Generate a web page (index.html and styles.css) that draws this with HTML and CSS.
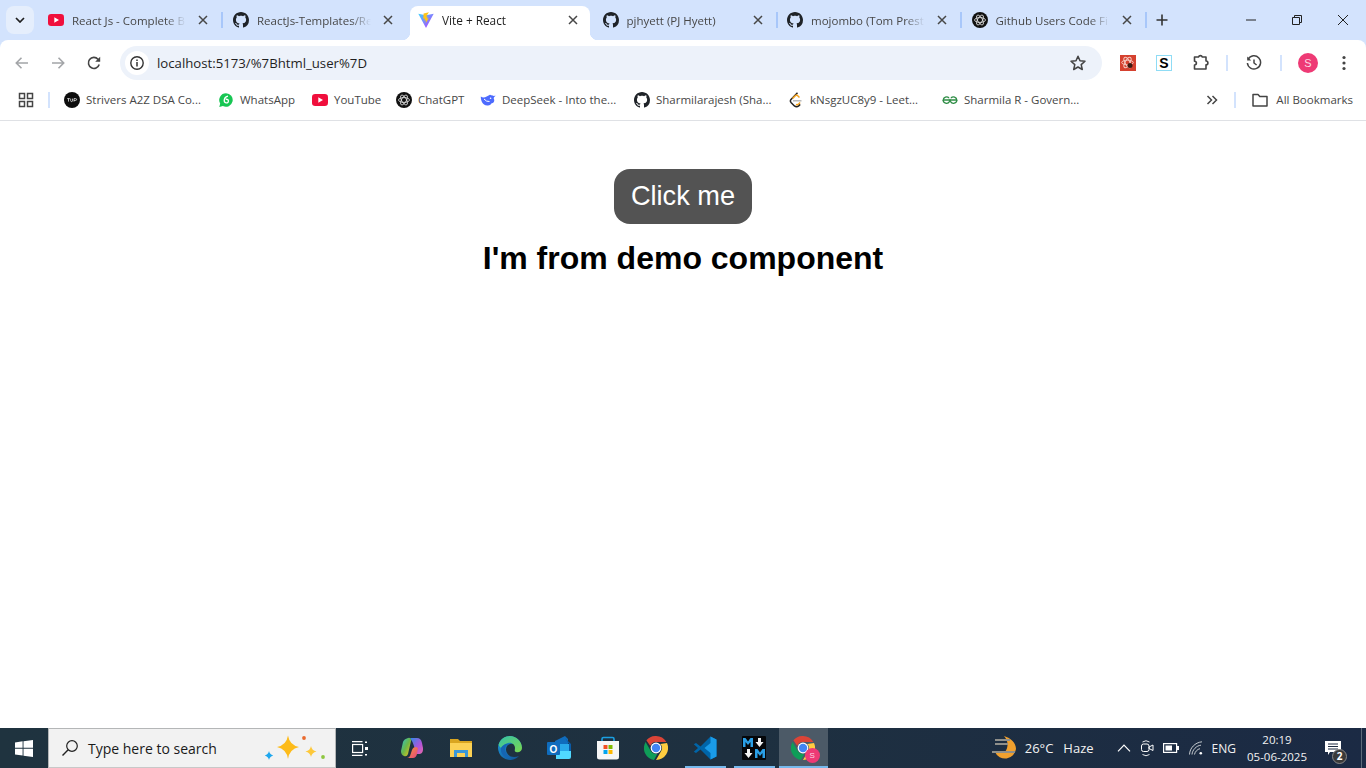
FILE: index.html
```html
<!DOCTYPE html>
<html lang="en">
<head>
<meta charset="utf-8">
<title>Vite + React</title>
<link rel="stylesheet" href="styles.css">
</head>
<body>
<svg class="defs" aria-hidden="true">
  <defs>
    <symbol id="gh" viewBox="0 0 16 16"><path fill="#1f2328" d="M8 0C3.58 0 0 3.58 0 8c0 3.54 2.29 6.53 5.47 7.59.4.07.55-.17.55-.38 0-.19-.01-.82-.01-1.49-2.01.37-2.53-.49-2.69-.94-.09-.23-.48-.94-.82-1.13-.28-.15-.68-.52-.01-.53.63-.01 1.08.58 1.23.82.72 1.21 1.87.87 2.33.66.07-.52.28-.87.51-1.07-1.78-.2-3.64-.89-3.64-3.95 0-.87.31-1.59.82-2.15-.08-.2-.36-1.02.08-2.12 0 0 .67-.21 2.2.82.64-.18 1.32-.27 2-.27s1.36.09 2 .27c1.53-1.04 2.2-.82 2.2-.82.44 1.1.16 1.92.08 2.12.51.56.82 1.27.82 2.15 0 3.07-1.87 3.75-3.65 3.95.29.25.54.73.54 1.48 0 1.07-.01 1.93-.01 2.2 0 .21.15.46.55.38A8.013 8.013 0 0016 8c0-4.42-3.58-8-8-8z"/></symbol>
    <symbol id="yt" viewBox="0 0 16 16"><rect x="0" y="2" width="16" height="12" rx="3.2" fill="#f00f3c"/><path d="M6.3 5.2v5.6L11 8z" fill="#fff"/></symbol>
    <symbol id="gpt" viewBox="0 0 16 16"><circle cx="8" cy="8" r="8" fill="#111"/><g fill="none" stroke="#e8e8e8" stroke-width=".8"><ellipse cx="8" cy="8" rx="5.5" ry="2.4"/><ellipse cx="8" cy="8" rx="5.5" ry="2.4" transform="rotate(60 8 8)"/><ellipse cx="8" cy="8" rx="5.5" ry="2.4" transform="rotate(120 8 8)"/></g></symbol>
    <symbol id="x" viewBox="0 0 10 10"><path d="M1 1l8 8M9 1L1 9" stroke="#474747" stroke-width="1.5" fill="none"/></symbol>
    <symbol id="chrome" viewBox="0 0 24 24"><path fill="#db4437" d="M12 0a12 12 0 0 1 10.4 6H12a6 6 0 0 0-5.7 4.1L2.4 4.3A12 12 0 0 1 12 0z"/><path fill="#0f9d58" d="M1.6 6 6.8 15a6 6 0 0 0 6.6 2.8L10 24A12 12 0 0 1 1.6 6z"/><path fill="#ffcd40" d="M23 7a12 12 0 0 1-11 17l5.2-9A6 6 0 0 0 16.4 8z"/><circle cx="12" cy="12" r="5.4" fill="#fff"/><circle cx="12" cy="12" r="4.2" fill="#4285f4"/></symbol>
  </defs>
</svg>

<header class="tabstrip">
  <button class="tabsearch"><svg width="10" height="6" viewBox="0 0 10 6"><path d="M1 1l4 4 4-4" fill="none" stroke="#1f1f1f" stroke-width="1.7"/></svg></button>
  <div class="tab lead sep">
    <svg class="fav" viewBox="0 0 16 16"><use href="#yt"/></svg><span class="title">React Js - Complete B</span>
    <svg class="close" viewBox="0 0 10 10"><use href="#x"/></svg>
  </div>
  <div class="tab lead">
    <svg class="fav" viewBox="0 0 16 16"><use href="#gh"/></svg><span class="title">ReactJs-Templates/Re</span>
    <svg class="close" viewBox="0 0 10 10"><use href="#x"/></svg>
  </div>
  <div class="tab active">
    <svg class="fav" viewBox="0 0 16 16"><defs><linearGradient id="vg" x1="0" y1="0" x2="1" y2="1"><stop offset="0" stop-color="#41d1ff"/><stop offset="1" stop-color="#bd34fe"/></linearGradient></defs><path fill="url(#vg)" d="M.3 1.800 8 16 15.700 1.800 8 3.200z"/><path fill="#ffc517" d="M10.900.3 5.600 1.400l-.3 5.400 1.600-.4-.4 2.300 1.600-.4-.5 3 3.200-5.100-1.800.4.6-2.200-1.600.3z"/></svg><span class="title">Vite + React</span>
    <svg class="close" viewBox="0 0 10 10"><use href="#x"/></svg>
  </div>
  <div class="tab sep">
    <svg class="fav" viewBox="0 0 16 16"><use href="#gh"/></svg><span class="title">pjhyett (PJ Hyett)</span>
    <svg class="close" viewBox="0 0 10 10"><use href="#x"/></svg>
  </div>
  <div class="tab sep">
    <svg class="fav" viewBox="0 0 16 16"><use href="#gh"/></svg><span class="title">mojombo (Tom Prest</span>
    <svg class="close" viewBox="0 0 10 10"><use href="#x"/></svg>
  </div>
  <div class="tab sep">
    <svg class="fav" viewBox="0 0 16 16"><use href="#gpt"/></svg><span class="title">Github Users Code Fi</span>
    <svg class="close" viewBox="0 0 10 10"><use href="#x"/></svg>
  </div>
  <button class="newtab"><svg width="12" height="12" viewBox="0 0 12 12"><path d="M6 .5v11M.5 6h11" stroke="#333" stroke-width="1.6"/></svg></button>
  <div class="winctrls">
    <button class="winbtn"><svg width="12" height="12" viewBox="0 0 12 12"><path d="M1 6h10" stroke="#222" stroke-width="1"/></svg></button>
    <button class="winbtn"><svg width="12" height="12" viewBox="0 0 12 12"><path d="M3.500 3V1.500h7v7H9M1.500 3.500h7v7h-7z" fill="none" stroke="#222" stroke-width="1"/></svg></button>
    <button class="winbtn"><svg width="12" height="12" viewBox="0 0 12 12"><path d="M1 1l10 10M11 1 1 11" stroke="#222" stroke-width="1"/></svg></button>
  </div>
</header>

<nav class="toolbar">
  <button class="nav"><svg width="16" height="16" viewBox="0 0 16 16"><path d="M14 8H2.500M7.500 2.800 2.300 8l5.200 5.200" fill="none" stroke="#a3a5a8" stroke-width="1.6"/></svg></button>
  <button class="nav"><svg width="16" height="16" viewBox="0 0 16 16"><path d="M2 8h11.500M8.500 2.800 13.700 8l-5.200 5.200" fill="none" stroke="#a3a5a8" stroke-width="1.6"/></svg></button>
  <button class="nav"><svg width="16" height="16" viewBox="0 0 16 16"><path d="M13.200 9.500A5.500 5.500 0 1 1 12 4.200L13.600 6" fill="none" stroke="#444" stroke-width="1.6"/><path d="M14.200 1.800v5h-5z" fill="#444"/></svg></button>
  <div class="omnibox">
    <span class="siteinfo"><svg width="16" height="16" viewBox="0 0 16 16"><circle cx="8" cy="8" r="6.200" fill="none" stroke="#333" stroke-width="1.4"/><path d="M8 7v4.400M8 4.400v1.500" stroke="#333" stroke-width="1.5"/></svg></span>
    <span class="url">localhost:5173/%7Bhtml_user%7D</span>
    <svg class="star" width="18" height="18" viewBox="0 0 18 18"><path d="m9 2.200 2 4.600 5 .5-3.800 3.300 1.100 4.900L9 13l-4.300 2.500 1.100-4.900L2 7.300l5-.5z" fill="none" stroke="#444" stroke-width="1.5" stroke-linejoin="round"/></svg>
  </div>
  <div class="actions">
    <svg class="ext-red" width="16" height="16" viewBox="0 0 16 16"><rect width="16" height="16" fill="#d5412f"/><g fill="none" stroke="#f6c9c0" stroke-width="1"><ellipse cx="7.500" cy="7.500" rx="5.800" ry="2.300"/><ellipse cx="7.500" cy="7.500" rx="5.800" ry="2.300" transform="rotate(60 7.500 7.500)"/><ellipse cx="7.500" cy="7.500" rx="5.800" ry="2.300" transform="rotate(120 7.500 7.500)"/></g><circle cx="10" cy="10.500" r="2.500" fill="#3d1a12"/></svg>
    <span class="ext-s">S</span>
    <svg class="puzzle" width="18" height="18" viewBox="0 0 18 18"><path d="M2.500 3H6.500a2 2 0 0 1 3.800 0h3.700v4a1.900 1.900 0 0 1 0 3.800V15H2.500v-4a1.800 1.800 0 0 0 0-3.800z" fill="none" stroke="#444" stroke-width="1.6" stroke-linejoin="round"/></svg>
    <i class="actsep"></i>
    <svg class="history" width="16" height="16" viewBox="0 0 16 16"><path d="M2.200 4.200A6.600 6.600 0 1 1 1.400 8" fill="none" stroke="#444" stroke-width="1.5"/><path d="M1.200 1.600v4h4z" fill="#444"/><path d="M8 4.400V8l2.600 2" fill="none" stroke="#444" stroke-width="1.5"/></svg>
    <i class="actsep"></i>
    <span class="avatar">S</span>
    <svg class="menu" width="4" height="16" viewBox="0 0 4 16"><circle cx="2" cy="2.500" r="1.600" fill="#444"/><circle cx="2" cy="8" r="1.600" fill="#444"/><circle cx="2" cy="13.500" r="1.600" fill="#444"/></svg>
  </div>
</nav>

<div class="bookmarks">
  <svg class="apps" width="16" height="16" viewBox="0 0 16 16"><g fill="none" stroke="#444" stroke-width="1.5"><rect x="1.500" y="1.500" width="5" height="5"/><rect x="9.500" y="1.500" width="5" height="5"/><rect x="1.500" y="9.500" width="5" height="5"/><rect x="9.500" y="9.500" width="5" height="5"/></g></svg>
  <i class="bmsep first"></i>
  <a class="bm long"><svg width="16" height="16" viewBox="0 0 16 16"><circle cx="8" cy="8" r="8" fill="#0d0d0d"/><path d="M3.200 6.600h2.600M4.500 6.600v3M6.700 6.600v2.200q0 .8.9.8t.9-.8V6.600M10 9.600V6.600h1.600q1 0 1 .9t-1 .9H10" fill="none" stroke="#fff" stroke-width=".7"/></svg><span>Strivers A2Z DSA Co...</span></a>
  <a class="bm whatsapp"><svg width="16" height="16" viewBox="0 0 16 16"><path d="M8 1.200a6.800 6.800 0 0 0-5.800 10.300L1.300 15l3.600-.9A6.800 6.800 0 1 0 8 1.200z" fill="#17c653"/><path d="M10 4.200Q7 4.600 6.300 7.600q-.5 2.800 1.800 3.300 2.200.2 2.300-1.900 0-2-2.700-1.700" fill="none" stroke="#fff" stroke-width="1.3"/></svg><span>WhatsApp</span></a>
  <a class="bm short"><svg width="16" height="16" viewBox="0 0 16 16"><use href="#yt"/></svg><span>YouTube</span></a>
  <a class="bm short"><svg width="16" height="16" viewBox="0 0 16 16"><use href="#gpt"/></svg><span>ChatGPT</span></a>
  <a class="bm long"><svg width="16" height="16" viewBox="0 0 16 16"><path d="M15.400 3.400c-.6.3-.8.5-1.300.5-.8 0-.8-.5-1.600-.5-3 0-1.600-.9-3-.4C7 4 4 7 .8 4.400.6 8 2.400 14 8 13.400c2-.2 3-1.200 3.600-2.200 1.400.1 2.600-.9 2.700-3 0-1.400-1-1.500-.4-2.800.4-.7 1.300-1 1.500-2z" fill="#4d6bfe"/><path d="M4 7q2.500 3 5.500 2.500" stroke="#fff" stroke-width="1" fill="none"/><circle cx="10.600" cy="6.200" r=".8" fill="#fff"/></svg><span>DeepSeek - Into the...</span></a>
  <a class="bm long"><svg width="16" height="16" viewBox="0 0 16 16"><use href="#gh"/></svg><span>Sharmilarajesh (Sha...</span></a>
  <a class="bm long"><svg width="16" height="16" viewBox="0 0 16 16"><path d="M9.500.8 3 7.400q-1.200 1.500 0 3l3.400 3.500q2.200 1.800 4.300 0l1.500-1.500" fill="none" stroke="#222" stroke-width="1.500"/><path d="M8 12.500q1.500.5 2.600-.5l1.500-1.500" fill="none" stroke="#f4a21c" stroke-width="1.500"/><path d="M5 8.800h8.500" stroke="#b3b3b3" stroke-width="1.400"/><path d="M4.500 6.500 7.500 3.500q1-.8 2.200.2l1.800 1.800" fill="none" stroke="#f4a21c" stroke-width="1.500"/></svg><span>kNsgzUC8y9 - Leet...</span></a>
  <a class="bm"><svg width="16" height="16" viewBox="0 0 16 16"><g fill="none" stroke="#2f8d46" stroke-width="1.300"><path d="M8 8H1.200a3.300 3.300 0 0 1 5.800-2M8 8h6.800A3.300 3.300 0 0 0 9 6"/><path d="M1.200 8a3.300 3.300 0 0 0 6.200 1.600L8 8l.6 1.600A3.300 3.300 0 0 0 14.800 8"/></g></svg><span>Sharmila R - Govern...</span></a>
  <svg class="more" width="12" height="10" viewBox="0 0 12 10"><path d="M1.500 1l4 4-4 4M6.500 1l4 4-4 4" fill="none" stroke="#444" stroke-width="1.500"/></svg>
  <i class="bmsep"></i>
  <a class="allbm"><svg width="18" height="16" viewBox="0 0 18 16"><path d="M2 2.500h5l1.800 2H16v9.500H2z" fill="none" stroke="#444" stroke-width="1.500" stroke-linejoin="round"/></svg><span>All Bookmarks</span></a>
</div>

<main class="page">
  <button class="cta">Click me</button>
  <h1 class="heading">I'm from demo component</h1>
</main>

<footer class="taskbar">
  <button class="start"><svg width="18" height="17" viewBox="0 0 18 17"><path fill="#fff" d="M0 2.400 7.600 1.300v6.500H0zM8.500 1.200 18 0v7.800H8.500zM0 8.800h7.600v6.800L0 14.500zM8.500 8.800H18V17l-9.500-1.300z"/></svg></button>
  <div class="search">
    <svg width="18" height="18" viewBox="0 0 18 18"><circle cx="11" cy="7" r="5.300" fill="none" stroke="#222" stroke-width="1.200"/><path d="M7.200 10.800 1.500 16.500" stroke="#222" stroke-width="1.400"/></svg>
    <span class="placeholder">Type here to search</span>
    <svg class="sparkle" width="64" height="32" viewBox="0 0 64 32"><path d="M25 3.500q1.500 9.500 11 11.500-9.500 2-11 12-1.500-10-11-12 9.500-2 11-11.500z" fill="#fdbb1a"/><path d="M48 14q.8 4.500 5.500 5.500-4.700 1-5.500 5.500-.8-4.500-5.500-5.500 4.700-1 5.500-5.500z" fill="#fdc83a"/><path d="M6 19q.6 3.400 4.200 4.500-3.600 1-4.200 4.500-.6-3.500-4.200-4.500 3.600-1.100 4.200-4.500z" fill="#1ea7ee"/><circle cx="41" cy="6" r="1.900" fill="#ea6a2e"/><circle cx="60" cy="25" r="1.900" fill="#8dc63f"/></svg>
  </div>
  <button class="tb taskview"><svg width="16" height="15" viewBox="0 0 16 15"><g fill="none" stroke="#fff" stroke-width="1.200"><path d="M0 .6h10.500M0 14.400h10.500"/><rect x=".6" y="3.500" width="10" height="8"/></g><path d="M13 .5h2v1.500h-2zM13 6h3v3h-3zM13 13h2v1.500h-2z" fill="#fff"/></svg></button>
  <button class="tb"><svg width="24" height="24" viewBox="0 0 24 24"><defs><linearGradient id="cp1" x1="0" y1="0" x2="1" y2="1"><stop offset="0" stop-color="#2ec5ce"/><stop offset=".5" stop-color="#6bb748"/><stop offset="1" stop-color="#f5c518"/></linearGradient><linearGradient id="cp2" x1="0" y1="0" x2="1" y2="1"><stop offset="0" stop-color="#2c8be8"/><stop offset=".6" stop-color="#b254d9"/><stop offset="1" stop-color="#e86aa8"/></linearGradient><linearGradient id="cp3" x1="0" y1="0" x2="1" y2="1"><stop offset="0" stop-color="#f59a36"/><stop offset="1" stop-color="#e6447e"/></linearGradient></defs><path fill="url(#cp2)" d="M10 2h7q4 0 5 5l1 5q.5 5-3 6h-4l-2-8q-1-4-4-8z"/><path fill="url(#cp1)" d="M8 2q3-1 3 3L8 18q-1 3-4 2-3-1-3-5l2-9q1-3 5-4z"/><path fill="url(#cp3)" d="M7 22h6q3 0 4-4l1-6-2-1q-3 0-4 3l-2 6q-1 2-3 2z"/></svg></button>
  <button class="tb"><svg width="22" height="20" viewBox="0 0 22 20"><path fill="#d9a520" d="M0 1h8l2 2h12v15H0z"/><path fill="#fbd155" d="M0 5h22v14H0z"/><path fill="#3a98d8" d="M4 12h14v7h-3v-4H7v4H4z"/></svg></button>
  <button class="tb"><svg width="24" height="24" viewBox="0 0 24 24"><defs><linearGradient id="ed1" x1="0" y1="0" x2="1" y2="1"><stop offset="0" stop-color="#34c1a8"/><stop offset="1" stop-color="#7bd84f"/></linearGradient><linearGradient id="ed2" x1="0" y1="0" x2="1" y2="1"><stop offset="0" stop-color="#1b9de2"/><stop offset="1" stop-color="#114a8b"/></linearGradient></defs><path fill="url(#ed2)" d="M12 0a12 12 0 1 0 9 20c-5 2-10 1-12-3-2-3-1-8 3-9 3-1 7 1 7 4h5C24 5 18 0 12 0z"/><path fill="url(#ed1)" d="M.5 9C2 3 7 0 12 0c6 0 12 5 12 12 0 3-3 5-6 4-2-1-1-2-1-4 0-3-3-6-7-5C6 8 4 10 3 12 2 11 1 10 .5 9z"/><path fill="#1565b3" d="M3 12c2-3 5-5 8-4-4 1-5 6-3 9 1 2 3 4 6 5C8 23 2 19 3 12z"/></svg></button>
  <button class="tb"><svg width="24" height="24" viewBox="0 0 24 24"><path fill="#0f6cbd" d="M8 5 18 0l3 3v5H8z"/><path fill="#28a8ea" d="M8 8h14v7H8z"/><path fill="#50d9ff" d="M9 15h15v6a2 2 0 0 1-2 2H9z"/><path fill="#0a5aa5" d="M18 2 24 8v7l-2 0V8z"/><rect x="0" y="6" width="13" height="13" rx="1" fill="#0f6cbd"/><text class="ol" x="6.500" y="16.500" text-anchor="middle">O</text></svg></button>
  <button class="tb"><svg width="24" height="24" viewBox="0 0 24 24"><path d="M6 6V3a1.500 1.500 0 0 1 1.500-1.500h9A1.500 1.500 0 0 1 18 3v3" fill="none" stroke="#1ba0e2" stroke-width="1.600"/><path fill="#f6f6f6" d="M1 5h22v16a2.500 2.500 0 0 1-2.500 2.500h-17A2.500 2.500 0 0 1 1 21z"/><path fill="#f25022" d="M7.500 9h4v4h-4z"/><path fill="#7fba00" d="M12.500 9h4v4h-4z"/><path fill="#00a4ef" d="M7.500 14h4v4h-4z"/><path fill="#ffb900" d="M12.500 14h4v4h-4z"/></svg></button>
  <button class="tb"><svg width="24" height="24" viewBox="0 0 24 24"><use href="#chrome"/></svg></button>
  <button class="tb run"><svg width="24" height="24" viewBox="0 0 24 24"><path fill="#0065a9" d="M17.500.6 23.500 3.500v17l-6 2.900L7.500 13.500 3 17 .8 15.800 5 12 .8 8.200 3 7l4.500 3.500z"/><path fill="#1a9be8" d="M17.500 .6 23.500 3.500v17l-6 2.900V17L11.500 12l6-5z"/></svg></button>
  <button class="tb run"><svg width="24" height="24" viewBox="0 0 24 24"><rect width="24" height="24" rx="1" fill="#05070a"/><path fill="#2a9fe6" d="M1 2h2.500L6 5.500 8.500 2H11v9H8.500V6L6 9 3.500 6v5H1zM13 13h2.500L18 16.500 20.500 13H23v9h-2.500v-5L18 20l-2.500-3v5H13z"/><path fill="#f2f2f2" d="M16 2h3v4h2.500l-4 5-4-5H16zM5 13h3v4h2.500l-4 5-4-5H5z"/></svg></button>
  <button class="tb run active"><svg width="24" height="24" viewBox="0 0 24 24"><use href="#chrome"/></svg><span class="tbbadge">S</span></button>
  <div class="tray">
    <svg class="weather" width="25" height="26" viewBox="0 0 25 26"><path fill="#f0a02e" d="M12 1C19 3 24 8 24 14A11 11 0 0 1 3 17H13C17 12 16 5 12 1z"/><path d="M3 5h15M3 9h13M0 17h23" stroke="#8f8f8a" stroke-width="2"/></svg>
    <span class="temp">26°C</span>
    <span class="haze">Haze</span>
    <svg class="chev" width="14" height="8" viewBox="0 0 14 8"><path d="M1 7.300 7 1.200l6 6.100" fill="none" stroke="#fff" stroke-width="1.200"/></svg>
    <svg class="meet" width="14" height="18" viewBox="0 0 14 18"><rect x="1.500" y="5" width="7.500" height="7.500" rx="2" fill="none" stroke="#fff"/><path d="m9 8 4-2v5.500l-4-2z" fill="none" stroke="#fff"/><path d="M2.500 3Q6 .5 9.500 3M2.500 15.500Q6 18 9.500 15.500" fill="none" stroke="#fff" stroke-width=".9"/></svg>
    <svg class="batt" width="16" height="10" viewBox="0 0 16 10"><rect x=".6" y=".6" width="13" height="8.800" fill="none" stroke="#fff" stroke-width="1.200"/><rect x="2.500" y="2.500" width="6.500" height="5" fill="#fff"/><rect x="14" y="3" width="2" height="4" fill="#fff"/></svg>
    <svg class="wifi" width="14" height="14" viewBox="0 0 14 14"><g fill="none" stroke="#d8dcdf" stroke-width=".9"><path d="M.5 13.500C.8 7 6 1.500 13 .8M3 13.500C3.300 9 7.500 4.500 12 4.200M5.500 13.500C5.800 11 8.500 8 11 7.700"/></g><circle cx="11.800" cy="12.200" r="1.300" fill="#fff"/></svg>
    <span class="lang">ENG</span>
    <div class="clock"><span>20:19</span><span>05-06-2025</span></div>
    <div class="notif">
      <svg width="16" height="15" viewBox="0 0 16 15"><path fill="#fff" d="M0 0h16v11H5l-2 3v-3H0z"/><path d="M3 3h10M3 5.500h10M3 8h10" stroke="#1d2b42" stroke-width="1"/></svg>
      <span class="nbadge">2</span>
    </div>
    <i class="showdesk"></i>
  </div>
</footer>
</body>
</html>
```

FILE: styles.css
```css
* { box-sizing: border-box; }
html, body { margin: 0; height: 100%; }
body {
  display: flex;
  flex-direction: column;
  width: 1366px;
  height: 768px;
  overflow: hidden;
  background: #d3e3fd;
  font-family: "Open Sans", "Noto Sans", sans-serif;
}
button { border: 0; padding: 0; background: none; display: flex; align-items: center; justify-content: center; font: inherit; }
svg { display: block; flex: none; }
i { display: block; flex: none; }
.defs { width: 0; height: 0; position: absolute; }

/* tab strip */
.tabstrip { height: 40px; display: flex; align-items: flex-end; flex: none; position: relative; }
.tabsearch { width: 28px; height: 28px; margin: 0 6px 6px 6px; border-radius: 8px; background: #e5eefc; flex: none; }
.tab {
  width: 184.5px;
  height: 34px;
  flex: none;
  display: flex;
  align-items: center;
  padding: 0 16.5px 6px 8px;
  font-size: 11.5px;
  color: #474747;
  position: relative;
}
.tab.lead { width: 185px; padding-right: 17px; }
.tab .fav { width: 16px; height: 16px; margin-right: 8px; }
.tab .title {
  flex: 1;
  white-space: nowrap;
  overflow: hidden;
  min-width: 0;
  -webkit-mask-image: linear-gradient(to right, #000 82%, transparent 100%);
  mask-image: linear-gradient(to right, #000 82%, transparent 100%);
}
.tab .close { width: 10px; height: 10px; margin-left: 12px; }
.tab.sep::after {
  content: "";
  position: absolute;
  left: 181px;
  top: 6px;
  width: 2px;
  height: 16px;
  background: #a8c7fa;
}
.tab.active {
  width: 180px;
  margin-right: 4.5px;
  padding-right: 12px;
  background: #fff;
  color: #1f1f1f;
  border-radius: 8px 8px 0 0;
  font-size: 11.8px;
}
.tab.active::before, .tab.active::after {
  content: "";
  position: absolute;
  bottom: 0;
  width: 8px;
  height: 8px;
}
.tab.active::before { left: -8px; background: radial-gradient(circle at 0 0, transparent 8px, #fff 8.5px); }
.tab.active::after { right: -8px; background: radial-gradient(circle at 100% 0, transparent 8px, #fff 8.5px); }
.newtab { width: 27px; height: 34px; flex: none; padding-bottom: 6px; }
.winctrls { margin-left: auto; display: flex; height: 40px; align-self: flex-start; }
.winbtn { width: 46px; height: 40px; }

/* toolbar */
.toolbar {
  height: 45px;
  flex: none;
  display: flex;
  align-items: center;
  background: #fff;
  border-radius: 8px 8px 0 0;
  padding: 0 0 0 4px;
}
.nav { width: 36px; height: 34px; flex: none; }
.omnibox {
  margin-left: 8px;
  width: 982px;
  height: 34px;
  border-radius: 17px;
  background: #edf2fa;
  display: flex;
  align-items: center;
  padding: 0 15px 0 5px;
  flex: none;
}
.siteinfo { width: 24px; height: 24px; border-radius: 50%; background: #fff; display: flex; align-items: center; justify-content: center; flex: none; }
.url { margin-left: 8px; font-size: 13.2px; color: #1f1f1f; flex: 1; }
.actions { display: flex; align-items: center; margin-left: 18px; }
.ext-s {
  width: 16px; height: 16px; margin-left: 20px;
  border: 1px solid #8fdcf5;
  font: bold 14px/14px "Liberation Sans", sans-serif;
  color: #000; text-align: center;
  flex: none;
}
.puzzle { margin-left: 20px; }
.actsep { width: 2px; height: 16px; background: #d3e3fd; }
.puzzle + .actsep { margin-left: 16px; }
.history { margin-left: 18px; }
.history + .actsep { margin-left: 18px; }
.avatar {
  width: 20px; height: 20px; margin-left: 16px; border-radius: 50%;
  background: #ee3a75; color: #fbd9e5;
  font: 11px/20px "Liberation Sans", sans-serif; text-align: center; flex: none;
}
.menu { margin-left: 24px; }

/* bookmarks */
.bookmarks {
  height: 36px;
  flex: none;
  display: flex;
  align-items: center;
  background: #fff;
  border-bottom: 1px solid #dfe1e5;
  padding: 0 0 5px 18px;
}
.bmsep { width: 2px; height: 16px; background: #d3e3fd; }
.bmsep.first { margin: 0 14px 0 14px; }
.bm { display: flex; align-items: center; gap: 6px; font-size: 11.5px; color: #474747; white-space: nowrap; flex: none; }
.bm span, .allbm span { padding-bottom: 2px; }
.bm.long { width: 154px; }
.bm.whatsapp { width: 94px; }
.bm.short { width: 84px; }
.more { margin-left: auto; margin-right: 16px; }
.allbm { display: flex; align-items: center; gap: 7px; margin: 0 13px 0 15px; font-size: 11.5px; color: #474747; white-space: nowrap; }

/* page */
.page {
  flex: 1;
  min-height: 0;
  background: #fff;
  display: flex;
  flex-direction: column;
  align-items: center;
  padding-top: 48px;
  font-family: "Liberation Sans", Arial, sans-serif;
}
.cta {
  width: 138px;
  height: 55px;
  border-radius: 16px;
  padding-bottom: 1px;
  background: #535353;
  color: #fff;
  font-size: 27.2px;
  font-family: inherit;
}
.heading { margin: 16px 0 0; font-size: 32px; line-height: 37px; font-weight: 700; color: #000; }

/* taskbar */
.taskbar {
  height: 40px;
  flex: none;
  display: flex;
  align-items: stretch;
  background: linear-gradient(to right, #1f333f, #1e3040 55%, #1b2a44);
  color: #fff;
}
.start { width: 48px; flex: none; }
.search {
  width: 288px;
  flex: none;
  background: #f2f2f2;
  border: 1px solid #b4b6b7;
  border-bottom-color: #c8c8c8;
  display: flex;
  align-items: center;
  padding-left: 12px;
  color: #1a1a1a;
}
.placeholder { margin-left: 9px; font-size: 14px; }
.sparkle { margin-left: auto; margin-right: 8px; }
.tb { width: 48.9px; flex: none; position: relative; }
.taskview { width: 51.5px; padding-right: 3px; }
.tb.run::after {
  content: "";
  position: absolute;
  left: 4px; right: 4px; bottom: 0;
  height: 2px;
  background: #76b9ed;
}
.tb.active { background: #4c5a67; }
.tb.active::after { left: 0; right: 0; }
.tbbadge {
  position: absolute;
  left: 26px; top: 20px;
  width: 15px; height: 15px; border-radius: 50%;
  background: #ee3a75; color: #fbd9e5;
  font: 8px/15px "Liberation Sans", sans-serif; text-align: center;
}
.ol { font: bold 10px "Liberation Sans", sans-serif; fill: #fff; }
.tray { margin-left: auto; display: flex; align-items: center; font-size: 13px; color: #f2f2f2; }
.temp { margin-left: 8px; }
.haze { margin-left: 10px; }
.chev { margin-left: 23px; }
.meet { margin-left: 9px; }
.batt { margin-left: 9px; }
.wifi { margin-left: 10px; }
.lang { margin-left: 9px; font-size: 12px; }
.clock { margin-left: 0; width: 82px; display: flex; flex-direction: column; align-items: center; font-size: 11.5px; line-height: 17px; }
.notif { position: relative; width: 16px; height: 15px; margin-left: 7px; }
.nbadge {
  position: absolute; left: 7px; top: 8px;
  width: 15px; height: 15px; border-radius: 50%;
  background: #3a3a3a; border: 1px solid #888; color: #fff;
  font: bold 10px/13px "Open Sans", sans-serif; text-align: center;
}
.showdesk { width: 1px; height: 40px; background: #5c6b7a; margin-left: 20px; margin-right: 4px; }
```
